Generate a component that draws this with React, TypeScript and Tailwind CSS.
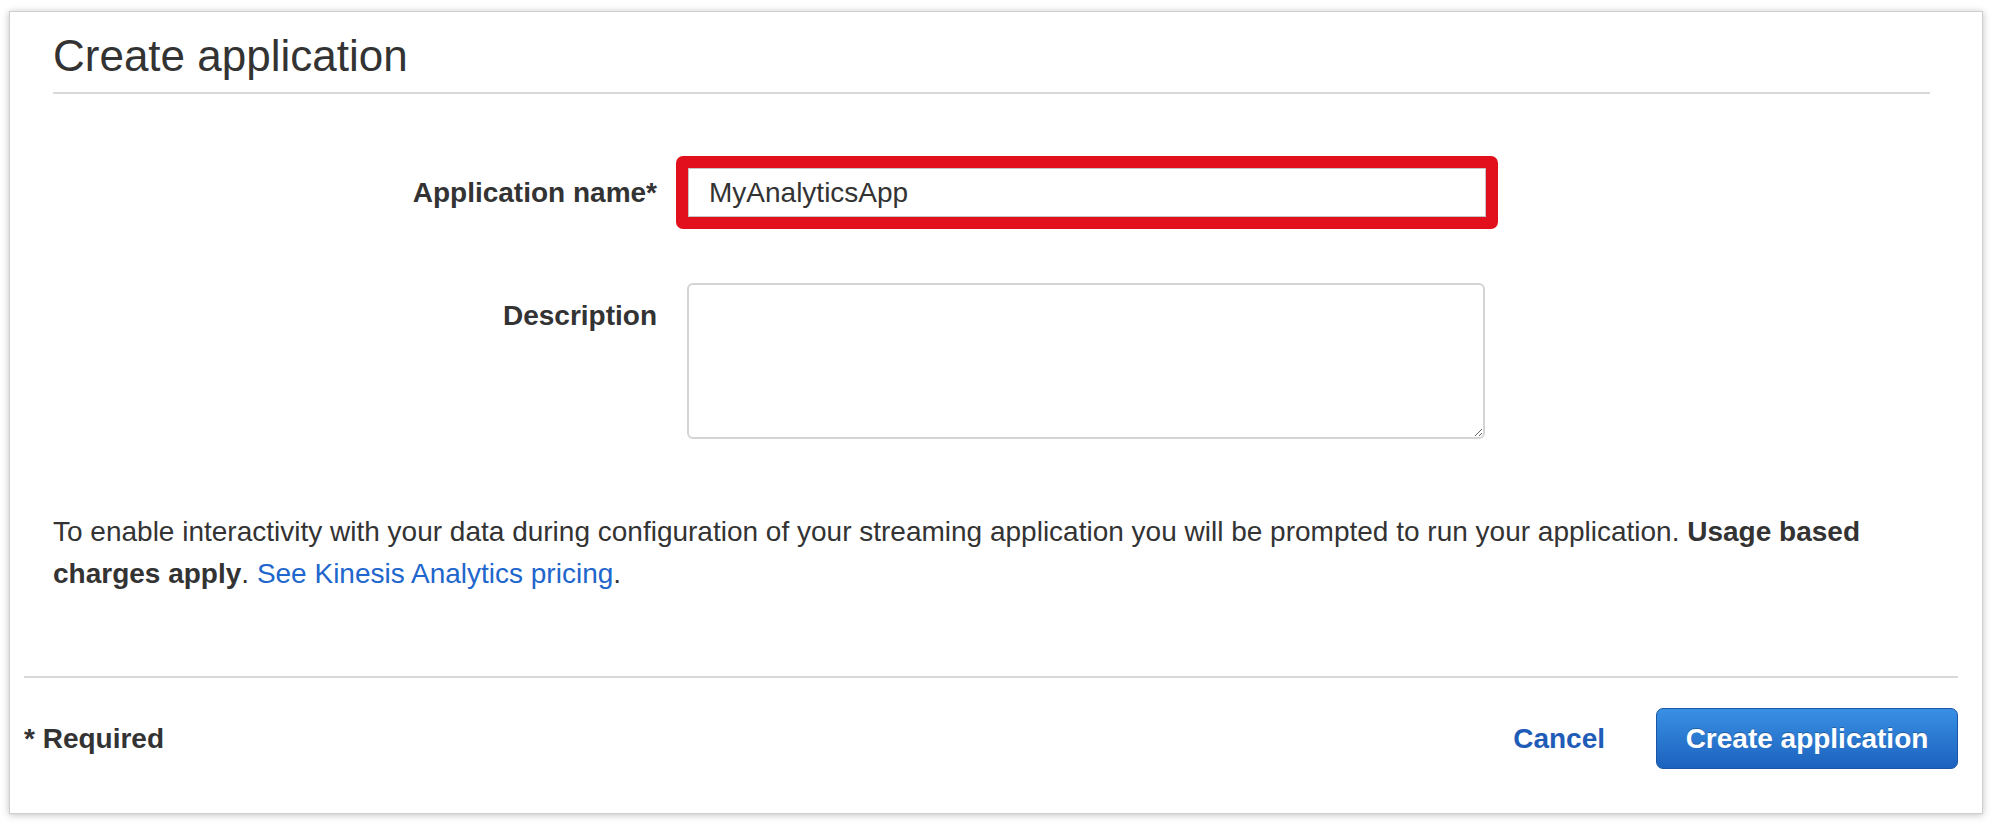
function App() {
  return (
    <div
      className="w-[1992px] h-[824px] bg-white pt-[11px] pl-[9px] text-[#333]"
      style={{ fontFamily: '"Liberation Sans", Arial, sans-serif' }}
    >
      <div className="w-[1974px] bg-white border border-[#cfcfcf] shadow-[0_1px_7px_rgba(0,0,0,0.25)]">
        <div className="pl-[43px] pr-[52px] pt-[20px] pb-[81px]">
          <h1 className="text-[44px] leading-[48px] pb-[12px] border-b-2 border-[#d9d9d9] text-[#333]">
            Create application
          </h1>

          <div className="mt-[62px] flex items-center">
            <label className="w-[604px] text-right text-[28px] font-bold text-[#333]">
              Application name*
            </label>
            <div className="ml-[19px] w-[822px] h-[73px] border-[12px] border-[#e20f1c] rounded-[7px] bg-white">
              <input
                type="text"
                defaultValue="MyAnalyticsApp"
                className="w-full h-full border border-[#c4c4c4] px-[20px] text-[28px] text-[#333] outline-none bg-white"
                style={{ fontFamily: '"Liberation Sans", Arial, sans-serif' }}
              />
            </div>
          </div>

          <div className="mt-[54px] flex items-start">
            <label className="w-[604px] text-right text-[28px] leading-[36px] pt-[15px] font-bold text-[#333]">
              Description
            </label>
            <textarea className="ml-[30px] w-[798px] h-[156px] border-2 border-[#d4d4d4] rounded-[6px] bg-white outline-none" />
          </div>

          <p className="mt-[72px] text-[28px] leading-[42px] text-[#333] whitespace-nowrap">
            To enable interactivity with your data during configuration of your streaming application you will be
            prompted to run your application. <span className="font-bold">Usage based</span>
            <br />
            <span className="font-bold">charges apply</span>.{" "}
            <a href="#" className="text-[#2166cc]">
              See Kinesis Analytics pricing
            </a>
            .
          </p>
        </div>

        <div className="ml-[14px] mr-[24px] border-t-2 border-[#d9d9d9] pt-[30px] pb-[44px] flex items-center justify-between">
          <span className="text-[28px] font-bold text-[#333]">* Required</span>
          <div className="flex items-center gap-[51px]">
            <a href="#" className="text-[28px] font-bold text-[#1f5cb8]">
              Cancel
            </a>
            <button className="w-[302px] h-[61px] rounded-[7px] border border-[#1a56a3] bg-gradient-to-b from-[#3990e4] to-[#1c62be] text-white text-[28px] font-bold [text-shadow:0_-1px_0_rgba(0,0,0,0.25)]">
              Create application
            </button>
          </div>
        </div>
      </div>
    </div>
  );
}

export default App;
